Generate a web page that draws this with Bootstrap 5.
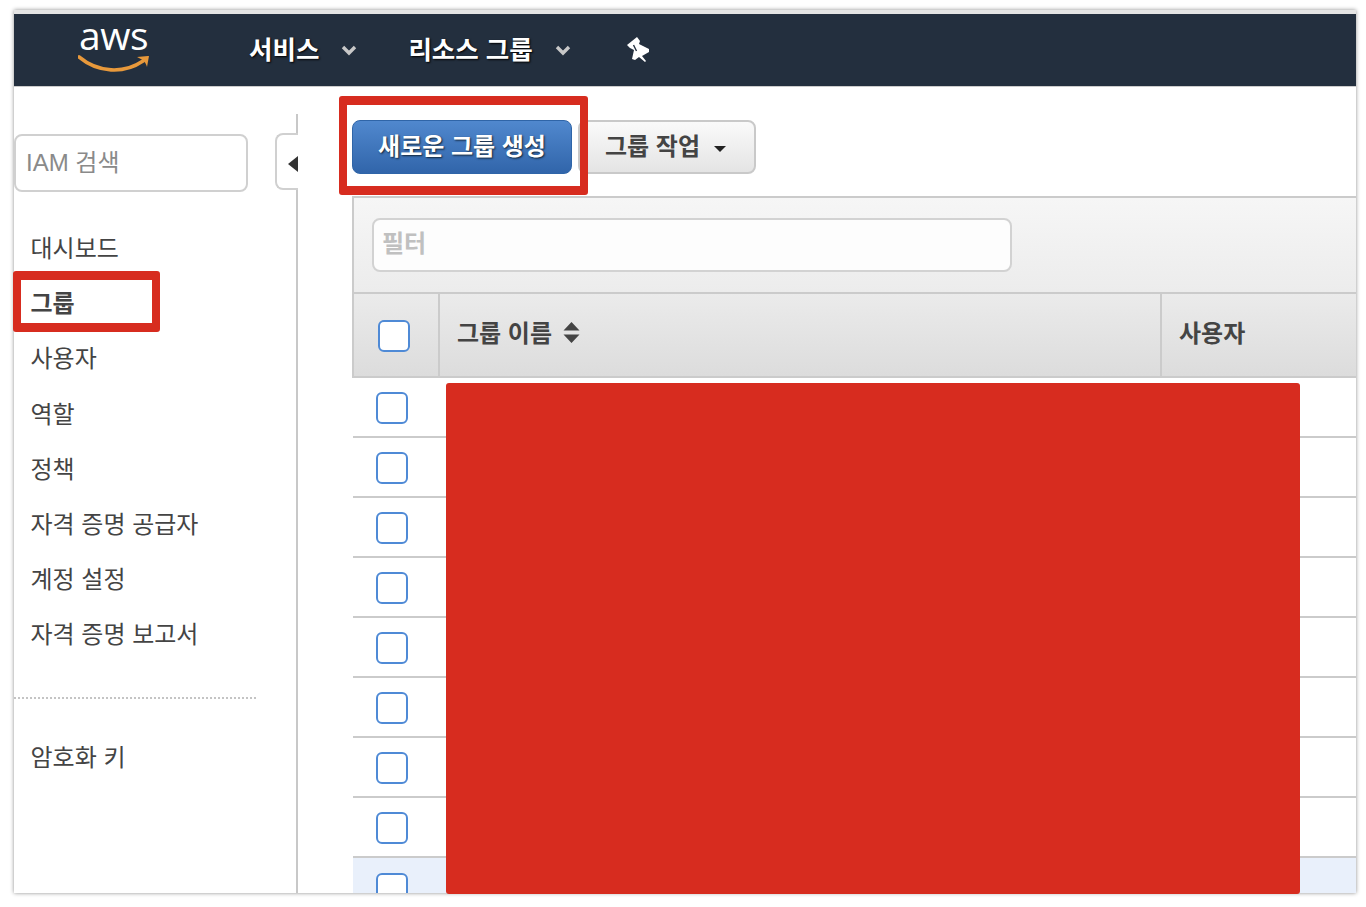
<!DOCTYPE html>
<html lang="ko">
<head>
  <title>IAM 그룹</title>
  <meta charset="UTF-8">
  <meta name="viewport" content="width=device-width, initial-scale=1">
  <link href="https://cdn.jsdelivr.net/npm/bootstrap@5.3.0/dist/css/bootstrap.min.css" rel="stylesheet">
  <style>
    html, body { height: 907px; overflow: hidden; background: #fff; }
    body { font-family: "Liberation Sans", "Noto Sans CJK KR", sans-serif; font-size: 24px; color: #444; }
    .stage { position: relative; width: 1366px; height: 907px; padding: 10px 10px 14px 14px; }
    .win { height: 883px; background: #fff; box-shadow: 0 0 4px rgba(0,0,0,.45); border-top: 4px solid #e4e4e4; }
    .win-body { height: 807px; overflow: hidden; }
    .topbar { height: 72px; background: #232f3e; box-shadow: 0 1px 0 #ccc; position: relative; z-index: 1; }
    .aws-box { width: 235px; padding-left: 64px; color: #fff; }
    .aws-word { display: block; font-family: "Open Sans", sans-serif; font-weight: 400; font-size: 39px; line-height: 40px; margin-top: -11px; padding-left: 1px; letter-spacing: -.5px; }
    .aws-box svg { display: block; }
    .top-item { font-weight: 700; font-size: 25.5px; color: #fff; text-shadow: 1px 1px 2px #000; line-height: 1.3; margin-top: 2px; }
    .top-arrow { margin-left: 22px; }
    .side { width: 284px; margin-top: 28px; border-right: 2px solid #c8c8c8; position: relative; height: 800px; flex: none; }
    .side-tab { position: absolute; left: 261px; top: 19px; width: 23px; height: 57px; background: #fff; border: 2px solid #d0d0d0; border-right: 0; border-radius: 8px 0 0 8px; }
    .side-tab::after { content: ""; position: absolute; left: 11px; top: 21px; border: 8px solid transparent; border-left: 0; border-right: 10px solid #333; }
    .side-search { margin: 20px 0 29px 0; width: 234px; height: 58px; border: 2px solid #d0d0d0; border-radius: 8px; font-size: 24px; padding: 0 10px; color: #444; box-shadow: none; }
    .side-search::placeholder { color: #8a8a8a; }
    .side-link { padding: 0 0 0 16.5px; height: 55.2px; line-height: 55.2px; color: #444; font-size: 24px; }
    .side-link.on { font-weight: 700; }
    .side-rule { border-top: 2px dotted #c4c4c4; width: 242px; margin: 34px 0 31px; }
    .main-col { padding: 34px 0 0 54px; min-width: 0; flex: 1; }
    .btn-new, .btn-act { height: 54px; font-size: 24px; font-weight: 700; border-radius: 8px; padding: 0; line-height: 1; }
    .btn-new { width: 220px; color: #fff; text-shadow: 1px 1px 2px #123; border: 1px solid #2f65a8; background: linear-gradient(#5088ce, #3165aa); }
    .btn-act { width: 178px; padding-right: 3px; color: #444; border: 2px solid #c9c9c9; background: linear-gradient(#fafafa, #e4e4e4); }
    .caret-mark { display: inline-block; margin-left: 14px; vertical-align: middle; border: 6px solid transparent; border-top: 6px solid #222; border-bottom: 0; }
    .filter-box { margin-top: 22px; height: 96px; padding: 20px 0 0 18px; background: linear-gradient(#f6f6f6, #ececec); border-top: 2px solid #cbcbcb; border-left: 2px solid #cbcbcb; }
    .filter-input { width: 640px; height: 54px; border: 2px solid #d2d2d2; border-radius: 8px; font-size: 24px; font-weight: 700; padding: 0 8px 2px; background: #fdfdfd; box-shadow: none; }
    .filter-input::placeholder { color: #c0c0c0; }
    .grp-table { table-layout: fixed; width: 100%; margin: 0; border-left: 0; }
    .grp-table th, .grp-table td { padding: 0; vertical-align: middle; background: transparent; box-shadow: none; }
    .grp-table thead tr { height: 84px; background: linear-gradient(#ebebeb, #dcdcdc); }
    .grp-table th { border-top: 2px solid #cbcbcb; border-bottom: 2px solid #cbcbcb; border-left: 2px solid #cbcbcb; font-size: 24px; color: #444; font-weight: 700; padding: 0 0 2px 17px; }
    .grp-table th:first-child { padding: 0 0 0 24px; }
    .grp-table thead .chk { margin-top: 2px; }
    .grp-table tbody tr { height: 60px; }
    .grp-table td { border-bottom: 2px solid #cbcbcb; padding-left: 23px; }
    .grp-table tr.sel td { background: #e9f0fb; border-bottom: 0; }
    .chk { width: 32px; height: 32px; margin: 0; float: none; display: block; border: 2px solid #4f8ad6; border-radius: 7px; }
    .grp-table td .chk { margin-top: 2px; }
    .sort-mark { display: inline-block; vertical-align: -1px; margin-left: 11px; }
    .mark-box { position: absolute; border: solid #d72c1f; border-width: 9px 8px; border-radius: 3px; }
    .mark-a { left: 339px; top: 96px; width: 249px; height: 99px; }
    .mark-b { left: 13px; top: 271px; width: 147px; height: 61px; }
    .mark-fill { position: absolute; left: 446px; top: 383px; width: 854px; height: 511px; background: #d72c1f; border-radius: 3px; }
  </style>
</head>
<body>

<div class="stage">
  <div class="win">
    <div class="topbar d-flex align-items-center">
      <div class="aws-box">
        <span class="aws-word">aws</span>
        <svg width="74" height="20" viewBox="0 0 74 20">
          <path d="M1 2 C20 18 46 19 65 6" fill="none" stroke="#e8993b" stroke-width="3.6" stroke-linecap="round"/>
          <path d="M59 2 L71 1 L69 12 C68 8 66 5 59 2 Z" fill="#e8993b"/>
        </svg>
      </div>
      <span class="top-item">서비스</span>
      <svg class="top-arrow" width="16" height="11" viewBox="0 0 16 11"><path d="M2 2 L8 8 L14 2" fill="none" stroke="#c8c8c8" stroke-width="3.4"/></svg>
      <span class="top-item" style="margin-left:51px">리소스 그룹</span>
      <svg class="top-arrow" width="16" height="11" viewBox="0 0 16 11"><path d="M2 2 L8 8 L14 2" fill="none" stroke="#c8c8c8" stroke-width="3.4"/></svg>
      <svg style="margin-left:56px" width="24" height="26" viewBox="0 0 24 26">
        <path d="M0 8 L10 0 L13 4 L12 7 L22 12 L22 15 L15 19 L19 24 L18 25 L12 20 L8 23 L5 22 L7 13 L3 11 Z" fill="#fff"/>
        <path d="M6.5 8 L9.5 14" stroke="#232f3e" stroke-width="1.4" fill="none"/>
      </svg>
    </div>

    <div class="d-flex win-body">
      <div class="side">
        <div class="side-tab"></div>
        <input class="form-control side-search" type="text" placeholder="IAM 검색">
        <nav class="nav flex-column">
          <a class="nav-link side-link" href="#">대시보드</a>
          <a class="nav-link side-link on" href="#">그룹</a>
          <a class="nav-link side-link" href="#">사용자</a>
          <a class="nav-link side-link" href="#">역할</a>
          <a class="nav-link side-link" href="#">정책</a>
          <a class="nav-link side-link" href="#">자격 증명 공급자</a>
          <a class="nav-link side-link" href="#">계정 설정</a>
          <a class="nav-link side-link" href="#">자격 증명 보고서</a>
        </nav>
        <div class="side-rule"></div>
        <a class="nav-link side-link" href="#">암호화 키</a>
      </div>

      <div class="main-col">
        <div class="d-flex" style="gap:6px">
          <button class="btn btn-new" type="button">새로운 그룹 생성</button>
          <button class="btn btn-act" type="button">그룹 작업<span class="caret-mark"></span></button>
        </div>
        <div class="filter-box">
          <input class="form-control filter-input" type="text" placeholder="필터">
        </div>
        <table class="table grp-table">
          <colgroup><col style="width:86px"><col style="width:722px"><col></colgroup>
          <thead>
            <tr>
              <th><input class="form-check-input chk" type="checkbox"></th>
              <th>그룹 이름<svg class="sort-mark" width="17" height="21" viewBox="0 0 17 21"><path d="M8.5 0 L16.5 8.5 L0.5 8.5 Z M0.5 12.5 L16.5 12.5 L8.5 21 Z" fill="#444"/></svg></th>
              <th>사용자</th>
            </tr>
          </thead>
          <tbody id="grp-rows"></tbody>
        </table>
      </div>
    </div>
  </div>

  <div class="mark-box mark-a"></div>
  <div class="mark-box mark-b"></div>
  <div class="mark-fill"></div>
</div>

<script>
  const rows = document.getElementById("grp-rows");
  for (let i = 0; i < 9; i++) {
    rows.innerHTML += `
      <tr class="${i === 8 ? "sel" : ""}">
        <td><input class="form-check-input chk" type="checkbox"></td>
        <td></td>
        <td></td>
      </tr>`;
  }
</script>
<script src="https://cdn.jsdelivr.net/npm/bootstrap@5.3.0/dist/js/bootstrap.bundle.min.js"></script>
</body>
</html>
